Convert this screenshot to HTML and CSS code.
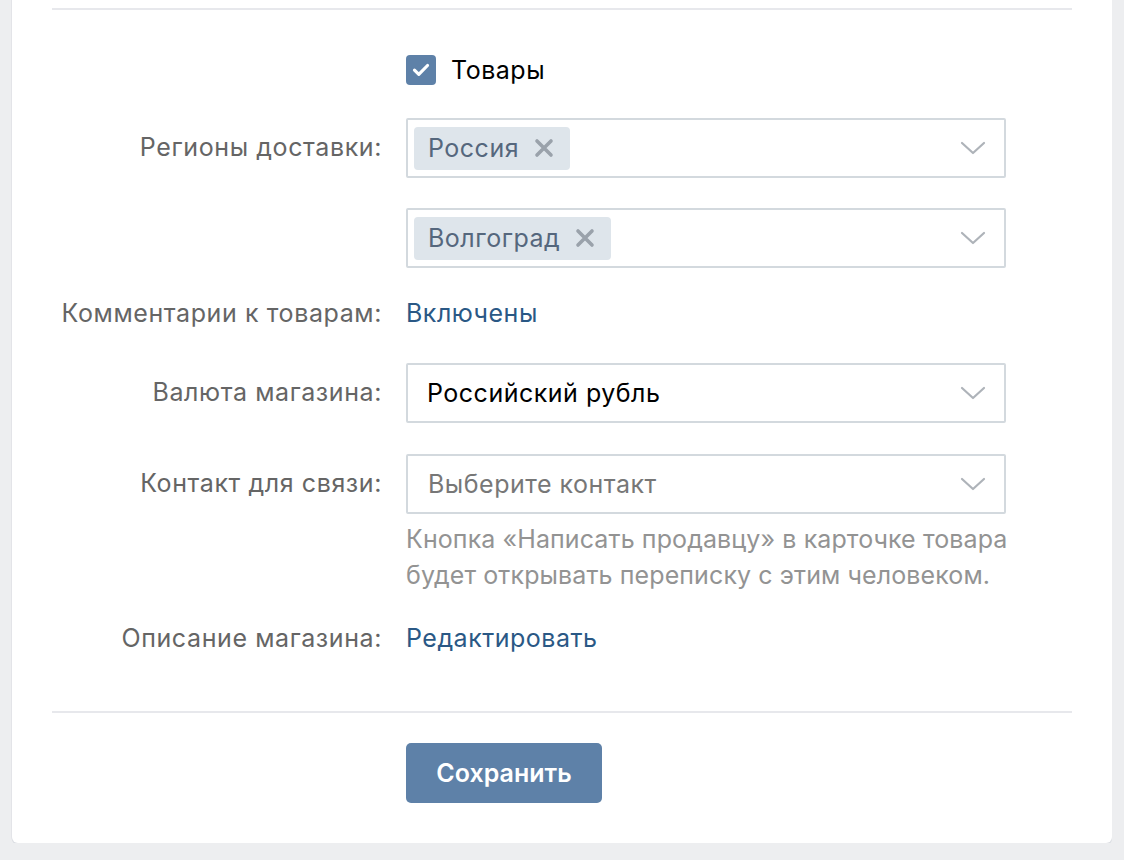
FILE: index.html
```html
<!DOCTYPE html>
<html lang="ru">
<head>
<meta charset="utf-8">
<title>Товары</title>
<link rel="stylesheet" href="styles.css">
</head>
<body>
<div class="card">
  <div class="sep"></div>
  <div class="form">
    <div class="row row-check">
      <div class="label"></div>
      <div class="field">
        <label class="check">
          <span class="box"><svg width="18" height="14" viewBox="0 0 18 14"><path d="M2.5 7.2 L6.8 11.3 L15.5 2.5" fill="none" stroke="#fff" stroke-width="3.2" stroke-linecap="round" stroke-linejoin="round"/></svg></span>
          <span class="check-text">Товары</span>
        </label>
      </div>
    </div>

    <div class="row row-input r-regions">
      <div class="label">Регионы доставки:</div>
      <div class="field">
        <div class="select">
          <span class="chip">Россия<svg class="x" width="20" height="20" viewBox="0 0 20 20"><path d="M3 3 L17 17 M17 3 L3 17" stroke="currentColor" stroke-width="3.6" stroke-linecap="round"/></svg></span>
          <svg class="chev" width="26" height="14" viewBox="0 0 26 14"><path d="M2 2 L13 12 L24 2" fill="none" stroke="currentColor" stroke-width="2.2" stroke-linecap="round" stroke-linejoin="round"/></svg>
        </div>
      </div>
    </div>

    <div class="row row-input r-city">
      <div class="label"></div>
      <div class="field">
        <div class="select">
          <span class="chip">Волгоград<svg class="x" width="20" height="20" viewBox="0 0 20 20"><path d="M3 3 L17 17 M17 3 L3 17" stroke="currentColor" stroke-width="3.6" stroke-linecap="round"/></svg></span>
          <svg class="chev" width="26" height="14" viewBox="0 0 26 14"><path d="M2 2 L13 12 L24 2" fill="none" stroke="currentColor" stroke-width="2.2" stroke-linecap="round" stroke-linejoin="round"/></svg>
        </div>
      </div>
    </div>

    <div class="row row-text r-comments">
      <div class="label">Комментарии к товарам:</div>
      <div class="field"><a class="link" href="#">Включены</a></div>
    </div>

    <div class="row row-input r-currency">
      <div class="label">Валюта магазина:</div>
      <div class="field">
        <div class="select">
          <span class="value">Российский рубль</span>
          <svg class="chev" width="26" height="14" viewBox="0 0 26 14"><path d="M2 2 L13 12 L24 2" fill="none" stroke="currentColor" stroke-width="2.2" stroke-linecap="round" stroke-linejoin="round"/></svg>
        </div>
      </div>
    </div>

    <div class="row row-input r-contact">
      <div class="label">Контакт для связи:</div>
      <div class="field">
        <div class="select">
          <span class="placeholder">Выберите контакт</span>
          <svg class="chev" width="26" height="14" viewBox="0 0 26 14"><path d="M2 2 L13 12 L24 2" fill="none" stroke="currentColor" stroke-width="2.2" stroke-linecap="round" stroke-linejoin="round"/></svg>
        </div>
        <div class="hint">Кнопка «Написать продавцу» в карточке товара будет открывать переписку с этим человеком.</div>
      </div>
    </div>

    <div class="row row-text r-desc">
      <div class="label">Описание магазина:</div>
      <div class="field"><a class="link" href="#">Редактировать</a></div>
    </div>
  </div>
  <div class="sep sep-bottom"></div>
  <div class="actions">
    <button class="btn" type="button">Сохранить</button>
  </div>
</div>
</body>
</html>
```

FILE: styles.css
```css
html, body {
  margin: 0;
  padding: 0;
}
body {
  background: #edeef0;
  font-family: Inter, Roboto, "Liberation Sans", sans-serif;
  font-size: 25px;
  letter-spacing: 0.5px;
  color: #000;
}
.card {
  margin-left: 12px;
  width: 1100px;
  background: #fff;
  border-radius: 0 0 6px 6px;
  box-shadow: 0 2px 0 0 #dcdee3, -1px 0 0 0 #e3e4e8;
  padding-top: 8px;
  padding-bottom: 40px;
}
.sep {
  height: 2px;
  background: #e7e8ec;
  margin: 0 40px;
}
.form {
  display: flex;
  flex-direction: column;
}
.row {
  display: grid;
  grid-template-columns: 370px 600px;
  column-gap: 24px;
  align-items: start;
}
.label {
  text-align: right;
  color: #656565;
  line-height: 36px;
  letter-spacing: 0.6px;
}
.row-input .label {
  padding-top: 11px;
}
.row-check { margin-top: 45px; }
.r-regions { margin-top: 33px; }
.r-city { margin-top: 30px; }
.r-comments { margin-top: 27px; }
.r-currency { margin-top: 32px; }
.r-contact { margin-top: 31px; }
.r-desc { margin-top: 27px; }

.check {
  display: flex;
  align-items: center;
  gap: 15px;
  height: 30px;
}
.box {
  width: 30px;
  height: 30px;
  border-radius: 4px;
  background: #5e81a8;
  display: flex;
  align-items: center;
  justify-content: center;
}
.check-text {
  color: #000;
  line-height: 36px;
}
.select {
  box-sizing: border-box;
  height: 60px;
  border: 2px solid #d3d9de;
  border-radius: 2px;
  display: flex;
  align-items: center;
  padding: 0 18px 0 6px;
  background: #fff;
}
.chip {
  display: inline-flex;
  align-items: center;
  height: 43px;
  padding: 0 16px 0 14px;
  background: #dee5eb;
  color: #55677d;
  border-radius: 4px;
  gap: 15px;
}
.x {
  color: #9aa2ab;
}
.chev {
  margin-left: auto;
  color: #aeb3b9;
}
.value {
  padding-left: 13px;
  color: #000;
}
.placeholder {
  padding-left: 14px;
  color: #777;
}
.hint {
  width: 620px;
  margin-top: 7px;
  color: #939393;
  line-height: 36px;
  letter-spacing: 0.1px;
}
.link {
  color: #2a5885;
  text-decoration: none;
  line-height: 36px;
}
.row-text .field {
  line-height: 36px;
}
.sep-bottom {
  margin-top: 55px;
}
.actions {
  padding-left: 394px;
  margin-top: 30px;
}
.btn {
  width: 196px;
  height: 60px;
  border: none;
  border-radius: 5px;
  background: #5e81a8;
  color: #fff;
  font-family: inherit;
  font-size: 25px;
  font-weight: 600;
  letter-spacing: 0;
  padding: 0;
}
```
